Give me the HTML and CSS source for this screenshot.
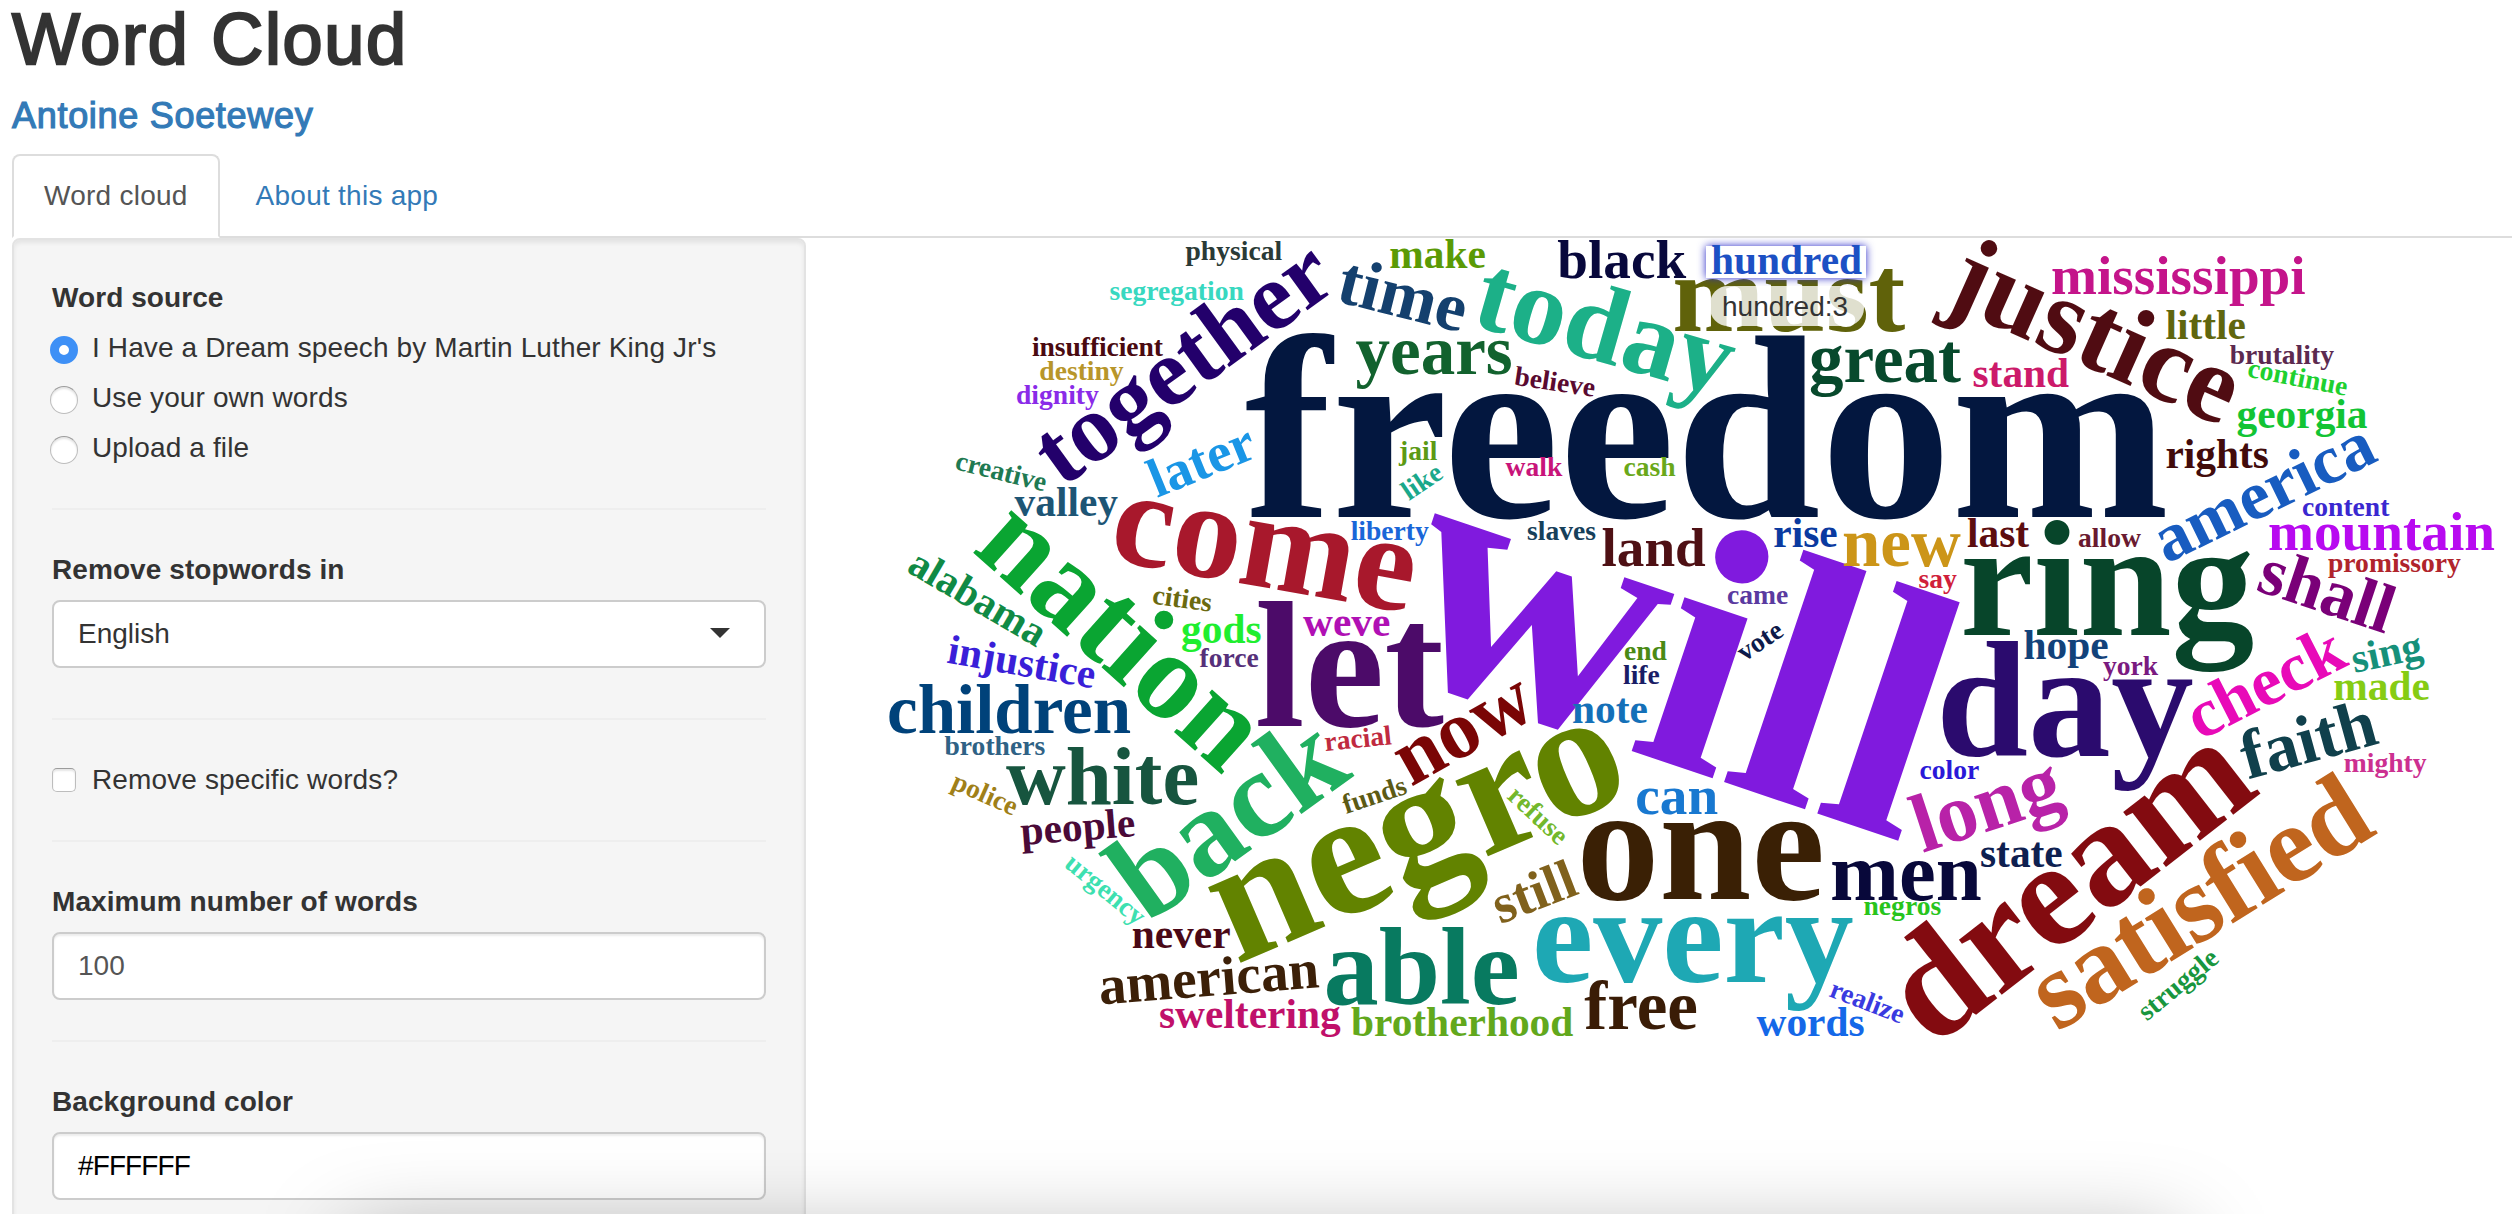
FILE: index.html
```html
<!DOCTYPE html>
<html lang="en">
<head>
<meta charset="utf-8">
<title>Word Cloud</title>
<link rel="stylesheet" href="styles.css">
</head>
<body>
<div class="container">
  <h1 class="title">Word Cloud</h1>
  <h4 class="author"><a href="#">Antoine Soetewey</a></h4>
  <ul class="tabs">
    <li class="tab active"><a href="#">Word cloud</a></li>
    <li class="tab"><a href="#">About this app</a></li>
  </ul>
  <div class="content">
    <form class="well">
      <div class="group">
        <span class="label">Word source</span>
        <label class="option"><span class="radio checked"></span>I Have a Dream speech by Martin Luther King Jr's</label>
        <label class="option"><span class="radio"></span>Use your own words</label>
        <label class="option"><span class="radio"></span>Upload a file</label>
      </div>
      <hr>
      <div class="group">
        <span class="label">Remove stopwords in</span>
        <div class="field select">English<span class="caret"></span></div>
      </div>
      <hr class="after-select">
      <div class="group">
        <label class="option single"><span class="checkbox"></span>Remove specific words?</label>
      </div>
      <hr>
      <div class="group">
        <span class="label">Maximum number of words</span>
        <div class="field number">100</div>
      </div>
      <hr>
      <div class="group">
        <span class="label">Background color</span>
        <div class="field color">#FFFFFF</div>
      </div>
    </form>
    <div class="plot">
      <svg class="cloud" viewBox="806 238 1706 976" width="1706" height="976">
        <g class="s26"><text fill="#801ade" transform="translate(1382 667) rotate(18.6)">will</text></g>
        <g class="s19"><text fill="#03173f" x="1244.6" y="517">freedom</text></g>
        <g class="s13">
          <text fill="#4c0b69" x="1254.8" y="725.5">let</text>
          <text fill="#628300" transform="translate(1236.3 964.7) rotate(-23.3)">negro</text>
        </g>
        <g class="s12">
          <text fill="#3a2005" x="1576.5" y="899.3">one</text>
          <text fill="#2b0b6e" x="1936" y="756">day</text>
          <text fill="#07452a" x="1960" y="635.3">ring</text>
        </g>
        <g class="s11"><text fill="#830b10" transform="translate(1932 1049) rotate(-37.9)">dream</text></g>
        <g class="s10">
          <text fill="#a8182c" transform="translate(1107 559.6) rotate(10)">come</text>
          <text fill="#1ea8b4" x="1532" y="981.5">every</text>
        </g>
        <g class="s9">
          <text fill="#0aa532" transform="translate(970.8 550.5) rotate(41.8)">nation</text>
          <text fill="#20b060" transform="translate(1147.2 924.6) rotate(-35.7)">back</text>
        </g>
        <g class="s8">
          <text fill="#1cb088" transform="translate(1469.2 324.4) rotate(16)">today</text>
          <text fill="#60620a" x="1672.3" y="331">must</text>
          <text fill="#500c12" transform="translate(1941.5 302) rotate(24)">justice</text>
          <text fill="#c0651e" transform="translate(2057 1032.5) rotate(-31.85)" textLength="379">satisfied</text>
          <text fill="#087a60" x="1323.5" y="1004">able</text>
        </g>
        <g class="s7"><text fill="#23006b" transform="translate(1062.2 488.4) rotate(-36)">together</text></g>
        <g class="s6">
          <text fill="#17553f" x="1006" y="803.5">white</text>
          <text fill="#7a0505" transform="translate(1411 787) rotate(-29.4)">now</text>
          <text fill="#b822a8" transform="translate(1922.5 853) rotate(-18.2)">long</text>
          <text fill="#08083a" x="1830" y="899.5">men</text>
        </g>
        <g class="s5">
          <text fill="#00427a" x="887" y="733.3">children</text>
          <text fill="#12622e" x="1355.5" y="373.5">years</text>
          <text fill="#14406e" transform="translate(1334.5 301) rotate(14)">time</text>
          <text fill="#07492c" x="1809" y="381.5">great</text>
          <text fill="#185cc0" transform="translate(2166.5 564) rotate(-26)">america</text>
          <text fill="#7a0078" transform="translate(2254.5 590) rotate(18.5)">shall</text>
          <text fill="#e80ab8" transform="translate(2200 741) rotate(-27)">check</text>
          <text fill="#10404c" transform="translate(2247.8 779.6) rotate(-15.4)">faith</text>
          <text fill="#cc9518" x="1842" y="565.7">new</text>
          <text fill="#3a1c06" x="1584.3" y="1029.3">free</text>
        </g>
        <g class="s4">
          <text fill="#1a96e6" transform="translate(1157 498) rotate(-22.2)">later</text>
          <text fill="#08083c" x="1557.3" y="277.5">black</text>
          <text fill="#c4148a" x="2051" y="293.7">mississippi</text>
          <text fill="#b80af0" x="2268" y="550">mountain</text>
          <text fill="#4e1014" x="1601.5" y="565.7">land</text>
          <text fill="#1878d0" x="1635.3" y="814">can</text>
          <text fill="#80611c" transform="translate(1500.3 924.3) rotate(-21)">still</text>
          <text fill="#3c2008" transform="translate(1100 1004.5) rotate(-4.5)">american</text>
        </g>
        <g class="s3">
          <text fill="#1d5575" x="1014.5" y="515.7">valley</text>
          <text fill="#108a45" transform="translate(905.5 571) rotate(30.3)">alabama</text>
          <text fill="#3a1fd8" transform="translate(946 662.5) rotate(10)">injustice</text>
          <text fill="#4a0a38" transform="translate(1021.5 845) rotate(-4.5)">people</text>
          <text fill="#4a0816" x="1131.7" y="947.5">never</text>
          <text fill="#1fee2f" x="1181" y="642.7">gods</text>
          <text fill="#b010b4" x="1303" y="635.5">weve</text>
          <text fill="#5a9a05" x="1389.3" y="267.5">make</text>
          <text fill="#cc1a6a" x="1972.5" y="387.3">stand</text>
          <text fill="#60660e" x="2165.5" y="339.3">little</text>
          <text fill="#12c434" x="2236.5" y="428">georgia</text>
          <text fill="#420b0b" x="2165.5" y="467.7">rights</text>
          <text fill="#0a3aa0" x="1773.3" y="547">rise</text>
          <text fill="#5c0d10" x="1967" y="547">last</text>
          <text fill="#1470b8" x="1572" y="723.3">note</text>
          <text fill="#12427a" x="2023.5" y="659.3">hope</text>
          <text fill="#16907a" transform="translate(2354.5 673) rotate(-12)">sing</text>
          <text fill="#86cc14" x="2333.3" y="699.5">made</text>
          <text fill="#0e2050" x="1980" y="867.3">state</text>
          <text fill="#1468e8" x="1756.5" y="1035.7">words</text>
          <text fill="#62a81c" x="1351" y="1035.5">brotherhood</text>
          <text fill="#c0106a" x="1159" y="1027.7">sweltering</text>
        </g>
        <g class="s2">
          <text fill="#2a3a36" x="1185.5" y="260">physical</text>
          <text fill="#38d8c0" x="1109.5" y="299.5">segregation</text>
          <text fill="#4a0a10" x="1032" y="355.5" textLength="131">insufficient</text>
          <text fill="#b8962a" x="1039.3" y="379.5">destiny</text>
          <text fill="#8a2be8" x="1016" y="404">dignity</text>
          <text fill="#1f7a52" transform="translate(954 469) rotate(14)">creative</text>
          <text fill="#2f6285" x="944.5" y="755.3">brothers</text>
          <text fill="#a08018" transform="translate(950 788) rotate(24)">police</text>
          <text fill="#3de0b0" transform="translate(1063.3 866) rotate(39.5)">urgency</text>
          <text fill="#6b6a10" transform="translate(1151.5 603.5) rotate(8)">cities</text>
          <text fill="#56307a" x="1199.5" y="667">force</text>
          <text fill="#c02a40" transform="translate(1325.3 751) rotate(-5.8)">racial</text>
          <text fill="#5c5a14" transform="translate(1346 814) rotate(-18.5)">funds</text>
          <text fill="#72b82c" transform="translate(1506 797.5) rotate(43)">refuse</text>
          <text fill="#4a8a14" x="1624" y="659.5">end</text>
          <text fill="#1a1d66" x="1623" y="683.7">life</text>
          <text fill="#5a3aa0" x="1727" y="604">came</text>
          <text fill="#0d1a4a" transform="translate(1744.4 662) rotate(-34)">vote</text>
          <text fill="#d0203a" x="1918.5" y="587.7">say</text>
          <text fill="#2a18d8" x="1919.5" y="779.3">color</text>
          <text fill="#7a1a80" x="2103" y="675.3">york</text>
          <text fill="#6a1a30" x="2078" y="547">allow</text>
          <text fill="#16405a" x="1527" y="540">slaves</text>
          <text fill="#1a66d8" x="1350.7" y="540">liberty</text>
          <text fill="#5c9a14" x="1399" y="459.7">jail</text>
          <text fill="#1aa88a" transform="translate(1409 501) rotate(-34)">like</text>
          <text fill="#c8147a" x="1505.5" y="475.7">walk</text>
          <text fill="#6aa81a" x="1623.5" y="475.7">cash</text>
          <text fill="#5a0a30" transform="translate(1513.5 384.7) rotate(8.6)">believe</text>
          <text fill="#5c2a50" x="2229.7" y="364">brutality</text>
          <text fill="#1ed030" transform="translate(2246.5 376.5) rotate(11)">continue</text>
          <text fill="#3a28d0" x="2302" y="515.7">content</text>
          <text fill="#b0242c" x="2328" y="572">promissory</text>
          <text fill="#cc3090" x="2343.8" y="771.7">mighty</text>
          <text fill="#28c41c" x="1863.5" y="915.3">negros</text>
          <text fill="#3a3ae0" transform="translate(1828 996) rotate(21)">realize</text>
          <text fill="#18963e" transform="translate(2147 1021.5) rotate(-39.5)">struggle</text>
        </g>
        <rect class="highlight" x="1706" y="246" width="160" height="32"/>
        <g class="s3"><text fill="#1c50c4" x="1711" y="273.8">hundred</text></g>
        <rect class="tip" x="1710" y="286" width="154" height="40" rx="18"/>
        <text class="tip-text" x="1722" y="315.5">hundred:3</text>
      </svg>
    </div>
  </div>
</div>
<div class="dock"><div class="dock-shadow"></div></div>
</body>
</html>
```
FILE: styles.css
```css
* { box-sizing: border-box; }

body {
  margin: 0;
  background: #fff;
  color: #333;
  font: 28px/40px "Liberation Sans", Arial, sans-serif;
}

a { color: #337ab7; text-decoration: none; }

.container {
  height: 1214px;
  overflow: hidden;
  padding: 0 8px 0 12px;
}

.title {
  margin: 0 0 17px;
  height: 79px;
  font-size: 72px;
  font-weight: 400;
  line-height: 79px;
  letter-spacing: 1.7px;
  -webkit-text-stroke: 2.4px #333;
}

.author {
  margin: 0 0 18px;
  font-size: 36px;
  font-weight: 400;
  line-height: 40px;
  letter-spacing: 0.7px;
  -webkit-text-stroke: 1.2px #337ab7;
}

.tabs {
  display: flex;
  gap: 4px;
  margin: 0;
  padding: 0;
  list-style: none;
  border-bottom: 2px solid #ddd;
}

.tab { margin-bottom: -2px; }

.tab a {
  display: block;
  padding: 20px 30px;
  border: 2px solid transparent;
  border-radius: 8px 8px 0 0;
  letter-spacing: 0.25px;
}

.tab.active a {
  color: #555;
  background: #fff;
  border-color: #ddd #ddd #fff;
}

.content { display: flex; }

.well {
  flex: none;
  width: 794px;
  height: 1100px;
  padding: 38px;
  background: #f5f5f5;
  border: 2px solid #e3e3e3;
  border-radius: 8px;
  box-shadow: inset 0 3px 4px rgba(0, 0, 0, 0.07);
}

.label {
  display: block;
  font-weight: 700;
  letter-spacing: 0.08px;
}

.option {
  display: flex;
  align-items: center;
  gap: 14px;
  height: 40px;
  margin-top: 10px;
  margin-left: -2px;
  white-space: nowrap;
  letter-spacing: 0.12px;
}

.option.single { margin-top: 0; }

.radio, .checkbox {
  flex: none;
  background: #fff;
  border: 1px solid #bdbdbd;
  border-top-color: #9c9c9c;
  box-shadow: inset 0 2px 2px rgba(0, 0, 0, 0.1);
}

.radio {
  position: relative;
  top: 2px;
  width: 28px;
  height: 28px;
  border-radius: 50%;
}

.radio.checked {
  border: 9px solid #3e90f6;
  box-shadow: none;
}

.checkbox {
  width: 24px;
  height: 24px;
  margin: 0 2px;
  border-radius: 5px;
}

hr {
  height: 2px;
  margin: 40px 0;
  border: 0;
  background: #eee;
}

hr.after-select { margin-top: 50px; }

.field {
  display: flex;
  align-items: center;
  justify-content: space-between;
  height: 68px;
  margin-top: 10px;
  padding: 0 24px;
  background: #fff;
  border: 2px solid #ccc;
  border-radius: 8px;
}

.number, .color { box-shadow: inset 0 2px 2px rgba(0, 0, 0, 0.075); }
.number { color: #555; }
.color { color: #000; letter-spacing: -0.9px; }

.caret {
  margin: -3px 10px 0 0;
  border: 10px solid transparent;
  border-top-color: #333;
  border-bottom-width: 0;
}

.plot { flex: 1; }

.cloud {
  display: block;
  font-family: "Liberation Serif", "Times New Roman", serif;
  font-weight: 700;
}

.s2 { font-size: 27.6px; }
.s3 { font-size: 41.4px; }
.s4 { font-size: 55.2px; }
.s5 { font-size: 69px; }
.s6 { font-size: 82.8px; }
.s7 { font-size: 96.6px; }
.s8 { font-size: 110.4px; }
.s9 { font-size: 124.2px; }
.s10 { font-size: 138px; }
.s11 { font-size: 151.8px; }
.s12 { font-size: 165.6px; }
.s13 { font-size: 179.4px; }
.s19 { font-size: 261.5px; }
.s26 { font-size: 354px; }

.highlight {
  fill: #fff;
  filter: drop-shadow(0 0 4px #2a2ac8);
}

.tip { fill: rgba(255, 255, 255, 0.8); }

.tip-text {
  fill: #333;
  font: 400 28px "Liberation Sans", Arial, sans-serif;
}

.dock {
  position: fixed;
  inset: 0;
  overflow: hidden;
  pointer-events: none;
}

.dock-shadow {
  height: 100px;
  margin: 1240px 340px 0 350px;
  box-shadow: 0 0 90px rgba(0, 0, 0, 0.34);
}
```
